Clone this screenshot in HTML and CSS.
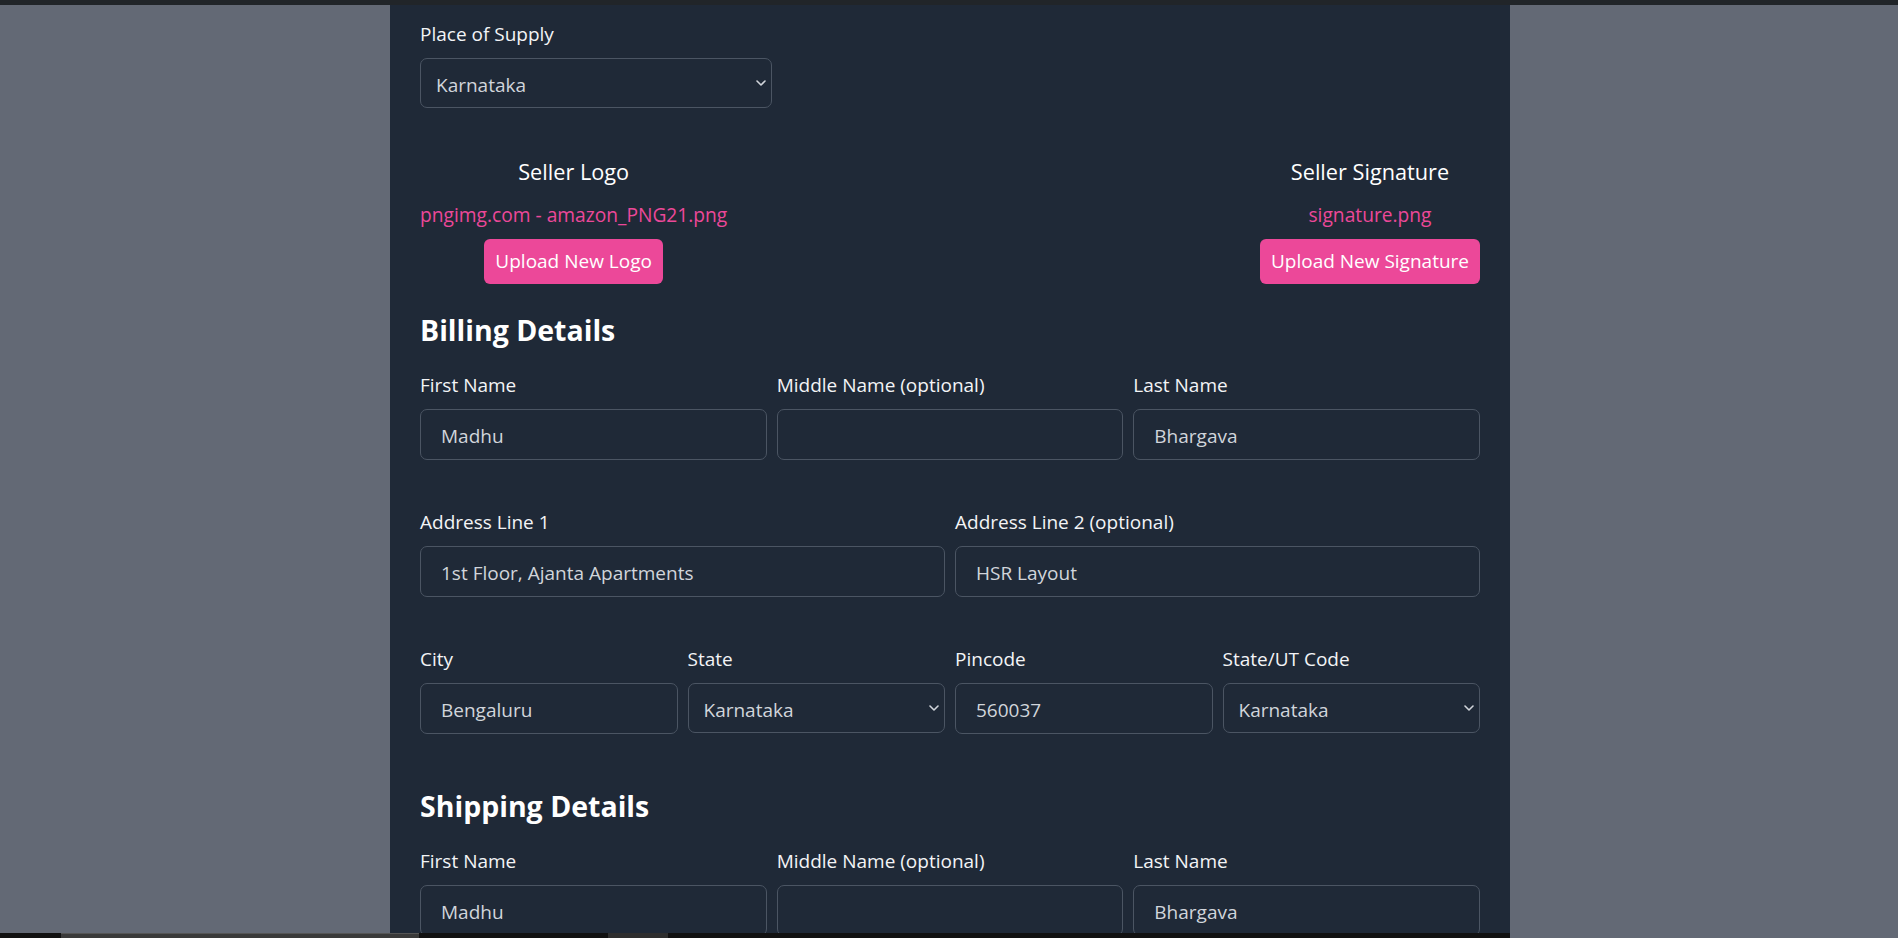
FILE: index.html
```html
<!DOCTYPE html>
<html lang="en">
<head>
<meta charset="utf-8">
<title>Invoice Form</title>
<link rel="stylesheet" href="styles.css">
</head>
<body>
<div class="topbar"></div>
<main class="panel">
  <div class="field supply">
    <label class="label">Place of Supply</label>
    <div class="select-wrap">
      <select class="control select"><option>Karnataka</option></select>
      <svg class="chevron" width="10" height="6" viewBox="0 0 10 6"><path d="M1 1l4 4 4-4" fill="none" stroke="#d1d5db" stroke-width="1.6" stroke-linecap="round" stroke-linejoin="round"/></svg>
    </div>
  </div>

  <div class="uploads">
    <div class="upload">
      <div class="upload-title">Seller Logo</div>
      <div class="file-name">pngimg.com - amazon_PNG21.png</div>
      <button class="btn">Upload New Logo</button>
    </div>
    <div class="upload">
      <div class="upload-title">Seller Signature</div>
      <div class="file-name">signature.png</div>
      <button class="btn">Upload New Signature</button>
    </div>
  </div>

  <section class="section billing">
    <h2 class="section-title">Billing Details</h2>
    <div class="row cols-3">
      <div class="field"><label class="label">First Name</label><input class="control" value="Madhu"></div>
      <div class="field"><label class="label">Middle Name (optional)</label><input class="control" value=""></div>
      <div class="field"><label class="label">Last Name</label><input class="control" value="Bhargava"></div>
    </div>
    <div class="row cols-2">
      <div class="field"><label class="label">Address Line 1</label><input class="control" value="1st Floor, Ajanta Apartments"></div>
      <div class="field"><label class="label">Address Line 2 (optional)</label><input class="control" value="HSR Layout"></div>
    </div>
    <div class="row cols-4">
      <div class="field"><label class="label">City</label><input class="control" value="Bengaluru"></div>
      <div class="field"><label class="label">State</label>
        <div class="select-wrap">
          <select class="control select"><option>Karnataka</option></select>
          <svg class="chevron" width="10" height="6" viewBox="0 0 10 6"><path d="M1 1l4 4 4-4" fill="none" stroke="#d1d5db" stroke-width="1.6" stroke-linecap="round" stroke-linejoin="round"/></svg>
        </div>
      </div>
      <div class="field"><label class="label">Pincode</label><input class="control" value="560037"></div>
      <div class="field"><label class="label">State/UT Code</label>
        <div class="select-wrap">
          <select class="control select"><option>Karnataka</option></select>
          <svg class="chevron" width="10" height="6" viewBox="0 0 10 6"><path d="M1 1l4 4 4-4" fill="none" stroke="#d1d5db" stroke-width="1.6" stroke-linecap="round" stroke-linejoin="round"/></svg>
        </div>
      </div>
    </div>
  </section>

  <section class="section shipping">
    <h2 class="section-title">Shipping Details</h2>
    <div class="row cols-3">
      <div class="field"><label class="label">First Name</label><input class="control" value="Madhu"></div>
      <div class="field"><label class="label">Middle Name (optional)</label><input class="control" value=""></div>
      <div class="field"><label class="label">Last Name</label><input class="control" value="Bhargava"></div>
    </div>
  </section>
</main>
<div class="hscroll">
  <div class="hscroll-thumb"></div>
  <div class="hscroll-mark"></div>
</div>
</body>
</html>
```
FILE: styles.css
```css
html, body {
  margin: 0;
  padding: 0;
  height: 100%;
  overflow: hidden;
}
body {
  background: #636975;
  font-family: "Open Sans", "Noto Sans", sans-serif;
  color: #f3f4f6;
}
.topbar {
  height: 5px;
  background: #212529;
}
.panel {
  width: 1060px;
  margin: 0 0 0 calc(50% - 559px);
  padding: 15px 30px 40px;
  background: #1f2937;
  min-height: 1000px;
}
.field {
  display: flex;
  flex-direction: column;
  min-width: 0;
}
.supply {
  width: 352px;
}
.label {
  display: block;
  font-size: 19px;
  line-height: 28px;
  margin-bottom: 10px;
  color: #f3f4f6;
}
.control {
  box-sizing: border-box;
  width: 100%;
  height: 51px;
  margin: 0;
  padding: 11.5px 20px 9.5px;
  border: 1px solid #4b5563;
  border-radius: 7px;
  background: #1f2937;
  color: #d1d5db;
  font-family: "Open Sans", "Noto Sans", sans-serif;
  font-size: 19px;
  line-height: 28px;
  outline: none;
}
.select-wrap {
  position: relative;
}
.select {
  -webkit-appearance: none;
  appearance: none;
  height: 50px;
  padding: 12px 30px 8px 15px;
}
.chevron {
  position: absolute;
  right: 6px;
  top: 22px;
  pointer-events: none;
}
.uploads {
  display: flex;
  justify-content: space-between;
  align-items: flex-start;
  margin-top: 49px;
}
.upload {
  display: flex;
  flex-direction: column;
  align-items: center;
}
.upload-title {
  font-size: 21.7px;
  line-height: 30px;
  color: #ffffff;
}
.file-name {
  margin-top: 14px;
  font-size: 19.2px;
  line-height: 28px;
  color: #ec4899;
}
.btn {
  margin-top: 10px;
  height: 45px;
  padding: 0 11px;
  border: none;
  border-radius: 6px;
  background: #ec4899;
  color: #ffffff;
  font-family: "Open Sans", "Noto Sans", sans-serif;
  font-size: 19px;
  line-height: 45px;
}
.section-title {
  margin: 0 0 21px;
  font-size: 28.5px;
  line-height: 40px;
  font-weight: 700;
  color: #ffffff;
}
.billing {
  margin-top: 26px;
}
.shipping {
  margin-top: 52px;
}
.row {
  display: grid;
  gap: 10px;
}
.row + .row {
  margin-top: 48px;
}
.cols-2 { grid-template-columns: repeat(2, 1fr); }
.cols-3 { grid-template-columns: repeat(3, 1fr); }
.cols-4 { grid-template-columns: repeat(4, 1fr); }
.hscroll {
  position: fixed;
  left: 0;
  bottom: 0;
  width: 1510px;
  height: 5px;
  background: #111111;
}
.hscroll-thumb {
  position: absolute;
  left: 61px;
  top: 0;
  width: 358px;
  height: 5px;
  background: #3a3a3a;
  border-top: 1px solid #555555;
  box-sizing: border-box;
}
.hscroll-mark {
  position: absolute;
  left: 608px;
  top: 0;
  width: 60px;
  height: 5px;
  background: #2e2e2e;
}
```
